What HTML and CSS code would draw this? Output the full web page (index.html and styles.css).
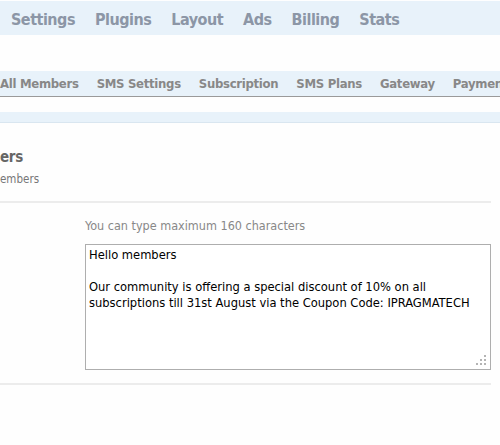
FILE: index.html
```html
<!DOCTYPE html>
<html>
<head>
<meta charset="utf-8">
<link rel="stylesheet" href="styles.css">
</head>
<body>
<nav class="topnav">
  <a>Settings</a><a>Plugins</a><a>Layout</a><a>Ads</a><a>Billing</a><a>Stats</a>
</nav>
<nav class="subnav">
  <a>All Members</a><a>SMS Settings</a><a>Subscription</a><a>SMS Plans</a><a>Gateway</a><a>Paymen</a>
</nav>
<div class="strip"></div>
<main class="content">
  <header class="head">
    <h2 class="title">ers</h2>
    <p class="subtitle">embers</p>
  </header>
  <section class="row">
    <div class="field">
      <p class="hint">You can type maximum 160 characters</p>
      <div class="box">
        <textarea class="msg">Hello members

Our community is offering a special discount of 10% on all subscriptions till 31st August via the Coupon Code: IPRAGMATECH</textarea>
        <svg class="grip" width="10" height="10" viewBox="0 0 10 10" aria-hidden="true">
          <rect x="8" y="0" width="2" height="2" fill="#b4b4b4"/>
          <rect x="4" y="4" width="2" height="2" fill="#b4b4b4"/>
          <rect x="8" y="4" width="2" height="2" fill="#b4b4b4"/>
          <rect x="0" y="8" width="2" height="2" fill="#b4b4b4"/>
          <rect x="4" y="8" width="2" height="2" fill="#b4b4b4"/>
          <rect x="8" y="8" width="2" height="2" fill="#b4b4b4"/>
        </svg>
      </div>
    </div>
  </section>
</main>
</body>
</html>
```

FILE: styles.css
```css
html, body {
  margin: 0;
  padding: 0;
  background: #fefefe;
  overflow: hidden;
}
body {
  font-family: "DejaVu Sans Condensed", "DejaVu Sans", sans-serif;
  width: 500px;
}
.topnav {
  margin-top: 1px;
  height: 34px;
  background: #e8f2fa;
  display: flex;
  align-items: center;
  gap: 20px;
  padding-left: 11px;
  padding-top: 2px;
  box-sizing: border-box;
  font-weight: bold;
  font-size: 16px;
  letter-spacing: -0.5px;
  color: #8c96a6;
  white-space: nowrap;
}
.subnav {
  margin-top: 36px;
  height: 25px;
  background: #e8f2fa;
  border-bottom: 1px solid #9a9a9a;
  display: flex;
  align-items: center;
  gap: 18px;
  padding-left: 0;
  font-weight: bold;
  font-size: 13px;
  letter-spacing: -0.3px;
  color: #888;
  white-space: nowrap;
}
.strip {
  margin-top: 15px;
  height: 10px;
  background: #e8f2fa;
  border-bottom: 1px solid #d9e6f0;
}
.content {
  width: 491px;
}
.head {
  padding-top: 24px;
  padding-bottom: 14px;
  border-bottom: 2px solid #ececec;
}
.title {
  margin: 0;
  font-size: 15px;
  font-weight: bold;
  color: #666;
  line-height: 20px;
  letter-spacing: -0.3px;
}
.subtitle {
  margin: 4px 0 0;
  font-size: 11.5px;
  color: #777;
  line-height: 16px;
}
.row {
  padding: 15px 0 13px 85px;
  border-bottom: 2px solid #ececec;
}
.hint {
  margin: 0 0 10px;
  font-size: 12.5px;
  color: #888;
  line-height: 16px;
}
.box {
  position: relative;
  width: 406px;
}
.msg {
  display: block;
  box-sizing: border-box;
  width: 406px;
  height: 126px;
  margin: 0;
  padding: 2px 3px;
  border: 1px solid #aeaeae;
  font-family: "DejaVu Sans Condensed", "DejaVu Sans", sans-serif;
  font-size: 12.8px;
  line-height: 16px;
  color: #000;
  resize: none;
  background: #fff;
  outline: none;
}
.grip {
  position: absolute;
  right: 5px;
  bottom: 5px;
}
```
